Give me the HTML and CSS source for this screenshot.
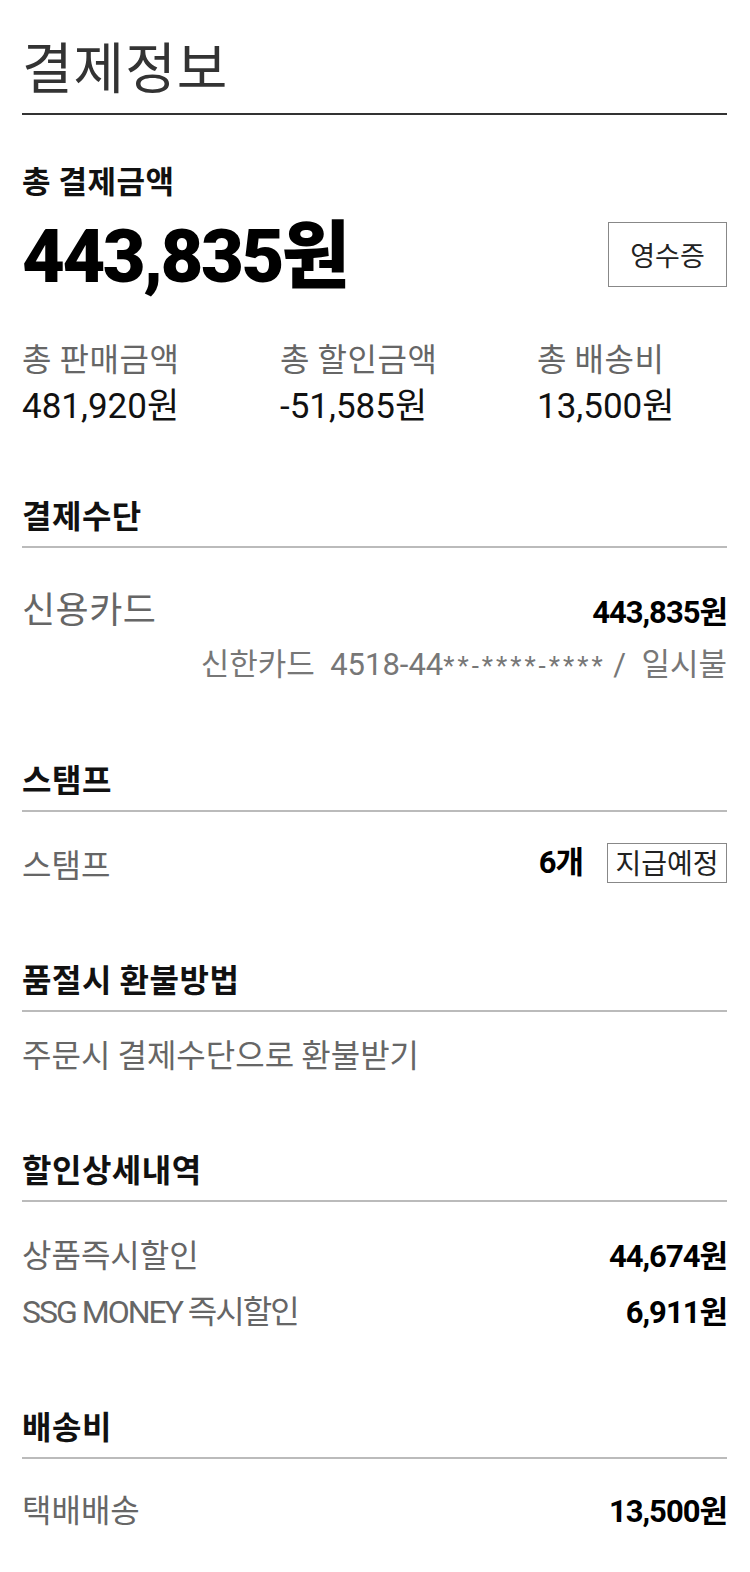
FILE: index.html
```html
<html>
<head>
	<meta charset="utf-8">
	<title>결제정보</title>
	<link rel="stylesheet" href="styles.css">
</head>
<body>

	<div class="page">

		<h1 class="title">결제정보</h1>

		<div class="total">
			<div class="total-label">총 결제금액</div>
			<div class="total-row">
				<div class="total-price">443,835원</div>
				<button type="button" class="box-btn receipt">영수증</button>
			</div>
			<div class="summary">
				<div class="sum-item">
					<div class="sum-label">총 판매금액</div>
					<div class="sum-value">481,920원</div>
				</div>
				<div class="sum-item">
					<div class="sum-label">총 할인금액</div>
					<div class="sum-value">-51,585원</div>
				</div>
				<div class="sum-item">
					<div class="sum-label">총 배송비</div>
					<div class="sum-value">13,500원</div>
				</div>
			</div>
		</div>

		<div class="section sec-pay">
			<h2 class="sec-title">결제수단</h2>
			<div class="row row-card">
				<span class="row-label big">신용카드</span>
				<span class="row-value">443,835원</span>
			</div>
			<div class="card-detail">신한카드&nbsp; 4518-44<span class="mask">**-****-****</span> /&nbsp; 일시불</div>
		</div>

		<div class="section sec-stamp">
			<h2 class="sec-title">스탬프</h2>
			<div class="row row-stamp">
				<span class="row-label">스탬프</span>
				<span class="stamp-right">
					<span class="row-value">6개</span>
					<span class="box-btn tag">지급예정</span>
				</span>
			</div>
		</div>

		<div class="section sec-refund">
			<h2 class="sec-title">품절시 환불방법</h2>
			<div class="row row-refund">
				<span class="row-label">주문시 결제수단으로 환불받기</span>
			</div>
		</div>

		<div class="section sec-discount">
			<h2 class="sec-title">할인상세내역</h2>
			<div class="row row-first">
				<span class="row-label">상품즉시할인</span>
				<span class="row-value">44,674원</span>
			</div>
			<div class="row row-next">
				<span class="row-label latin">SSG MONEY 즉시할인</span>
				<span class="row-value">6,911원</span>
			</div>
		</div>

		<div class="section sec-ship">
			<h2 class="sec-title">배송비</h2>
			<div class="row row-ship">
				<span class="row-label">택배배송</span>
				<span class="row-value">13,500원</span>
			</div>
		</div>

	</div>

</body>
</html>
```

FILE: styles.css
```css
body {
	background: white;
	color: #111;
	margin: 0;
	padding: 0;
	font-family: "Noto Sans CJK KR", sans-serif;
}
.page {
	padding: 0 23px 60px 22px;
}
h1, h2 {
	margin: 0;
	font-weight: normal;
}
.total-price, .sum-value, .row-value, .card-detail, .latin {
	font-family: Roboto, "Noto Sans CJK KR", sans-serif;
}

/* title */
.title {
	font-size: 55px;
	line-height: 52px;
	letter-spacing: 1px;
	color: #333;
	padding-top: 38px;
	padding-bottom: 23px;
	border-bottom: 2px solid #333;
}

/* total */
.total-label {
	margin-top: 50px;
	font-size: 31px;
	line-height: 30px;
	letter-spacing: 0.5px;
	font-weight: bold;
	color: #111;
}
.total-row {
	margin-top: 25px;
	display: flex;
	justify-content: space-between;
	align-items: flex-start;
}
.total-price {
	font-size: 74px;
	line-height: 74px;
	font-weight: 900;
	letter-spacing: -2.5px;
	color: #000;
}
.box-btn {
	background: white;
	border: 1px solid #888;
	color: #222;
	font-family: "Noto Sans CJK KR", sans-serif;
	box-sizing: border-box;
	text-align: center;
}
.receipt {
	width: 119px;
	height: 65px;
	margin-top: 2px;
	font-size: 27px;
	padding: 0;
}
.summary {
	margin-top: 48px;
	display: grid;
	grid-template-columns: 258px 257px 1fr;
}
.sum-label {
	font-size: 32px;
	line-height: 30px;
	letter-spacing: 0.5px;
	color: #666;
}
.sum-value {
	margin-top: 17px;
	font-size: 35px;
	line-height: 36px;
	color: #111;
}

/* sections */
.sec-title {
	font-size: 32px;
	line-height: 30px;
	letter-spacing: 0.5px;
	font-weight: bold;
	color: #111;
	padding-bottom: 17px;
	border-bottom: 2px solid #bbb;
}
.sec-pay { margin-top: 74px; }
.sec-stamp { margin-top: 82px; }
.sec-refund { margin-top: 80px; }
.sec-discount { margin-top: 85px; }
.sec-ship { margin-top: 82px; }

.row {
	display: flex;
	justify-content: space-between;
	align-items: baseline;
}
.row-label {
	font-size: 32px;
	line-height: 30px;
	color: #666;
}
.row-label.big {
	font-size: 36px;
	line-height: 34px;
	letter-spacing: 0.5px;
}
.row-label.latin {
	letter-spacing: -2px;
}
.row-value {
	font-size: 31px;
	line-height: 30px;
	font-weight: bold;
	letter-spacing: -1px;
	color: #000;
}
.row-card { margin-top: 42px; }
.row-refund { margin-top: 26px; }
.row-first { margin-top: 36px; }
.row-next { margin-top: 25px; }
.row-ship { margin-top: 34px; }

.card-detail {
	margin-top: 22px;
	font-size: 31px;
	line-height: 30px;
	color: #777;
	text-align: right;
}
.mask {
	font-size: 26px;
	letter-spacing: 3px;
}

.row-stamp {
	margin-top: 31px;
	align-items: center;
}
.stamp-right {
	display: flex;
	align-items: center;
	gap: 24px;
}
.tag {
	display: inline-block;
	width: 120px;
	height: 40px;
	font-size: 28px;
	line-height: 36px;
	padding: 0 3px;
}
```
